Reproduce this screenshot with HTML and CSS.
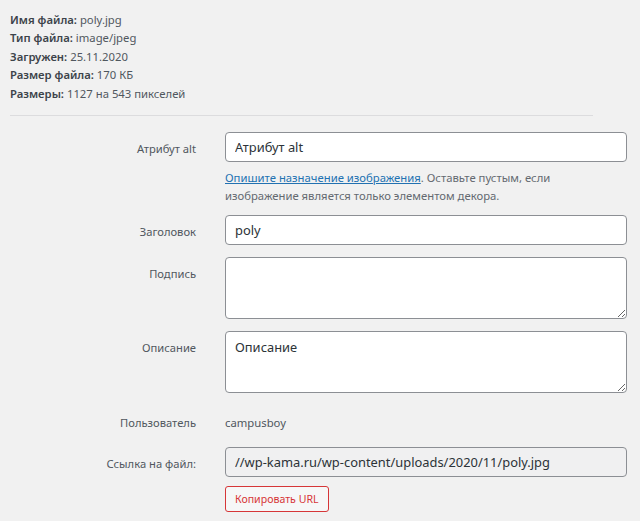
FILE: index.html
```html
<!DOCTYPE html>
<html lang="ru">
<head>
<meta charset="utf-8">
<title>Вложение</title>
<link rel="stylesheet" href="styles.css">
</head>
<body>
<div class="details">
  <div class="meta">
    <div class="meta-line"><strong>Имя файла:</strong> poly.jpg</div>
    <div class="meta-line"><strong>Тип файла:</strong> image/jpeg</div>
    <div class="meta-line"><strong>Загружен:</strong> 25.11.2020</div>
    <div class="meta-line"><strong>Размер файла:</strong> 170 КБ</div>
    <div class="meta-line"><strong>Размеры:</strong> 1127 на 543 пикселей</div>
  </div>
  <div class="sep"></div>
  <div class="form">
    <div class="row row-alt">
      <label class="label">Атрибут alt</label>
      <div class="field">
        <input class="input" type="text" value="Атрибут alt">
        <p class="desc"><a href="#">Опишите назначение изображения</a>. Оставьте пустым, если изображение является только элементом декора.</p>
      </div>
    </div>
    <div class="row">
      <label class="label">Заголовок</label>
      <div class="field"><input class="input" type="text" value="poly"></div>
    </div>
    <div class="row">
      <label class="label">Подпись</label>
      <div class="field"><textarea class="area"></textarea></div>
    </div>
    <div class="row">
      <label class="label">Описание</label>
      <div class="field"><textarea class="area">Описание</textarea></div>
    </div>
    <div class="row row-user">
      <span class="label label-text">Пользователь</span>
      <div class="field value">campusboy</div>
    </div>
    <div class="row row-url">
      <label class="label">Ссылка на файл:</label>
      <div class="field">
        <input class="input input-ro" type="text" readonly value="//wp-kama.ru/wp-content/uploads/2020/11/poly.jpg">
        <button class="copy" type="button">Копировать URL</button>
      </div>
    </div>
  </div>
</div>
</body>
</html>
```

FILE: styles.css
```css
html, body {
  margin: 0;
  padding: 0;
  background: #f1f1f1;
}
body {
  font-family: "Noto Sans", "Open Sans", sans-serif;
  color: #50575e;
  font-size: 11.3px;
  width: 640px;
  height: 521px;
  overflow: hidden;
}
.meta {
  padding: 11px 10px 0 10px;
}
.meta-line {
  line-height: 18.4px;
  font-size: 11.3px;
  color: #50575e;
}
.meta-line strong {
  font-weight: 600;
  color: #3c434a;
}
.sep {
  margin: 12px 47px 0 10px;
  border-top: 1px solid #dcdcde;
}
.form {
  padding-top: 16px;
}
.row {
  display: grid;
  grid-template-columns: 196px 402px;
  column-gap: 29px;
  align-items: start;
  margin-bottom: 12px;
}
.row-alt {
  margin-bottom: 10px;
}
.label {
  text-align: right;
  font-size: 11.2px;
  line-height: 27px;
  padding-top: 3px;
  color: #50575e;
}
.label-text {
  line-height: 18px;
  padding-top: 2px;
}
.field {
  display: flex;
  flex-direction: column;
  align-items: flex-start;
}
.input, .area {
  box-sizing: border-box;
  width: 402px;
  margin: 0;
  border: 1px solid #8c8f94;
  border-radius: 4px;
  background: #fff;
  color: #2c3338;
  font-family: "Noto Sans", "Open Sans", sans-serif;
  font-size: 12.9px;
}
.input {
  height: 30px;
  padding: 0 9px;
  line-height: 28px;
}
.input-ro {
  background: #f0f0f1;
}
.area {
  height: 62px;
  padding: 5px 9px;
  line-height: 20px;
  resize: vertical;
  display: block;
}
.desc {
  margin: 7px 0 0 0;
  max-width: 340px;
  font-size: 11.3px;
  line-height: 18px;
  color: #646970;
}
.desc a {
  color: #2271b1;
  text-decoration: underline;
}
.row-user {
  margin-top: 19px;
  margin-bottom: 15px;
}
.value {
  line-height: 18px;
  padding-top: 2px;
  color: #50575e;
}
.copy {
  margin-top: 9px;
  height: 26px;
  box-sizing: border-box;
  padding: 0 9px;
  border: 1px solid #d63638;
  border-radius: 3px;
  background: #f6f7f7;
  color: #d63638;
  font-family: "Noto Sans", "Open Sans", sans-serif;
  font-size: 10.6px;
  line-height: 24px;
  cursor: pointer;
}
```
